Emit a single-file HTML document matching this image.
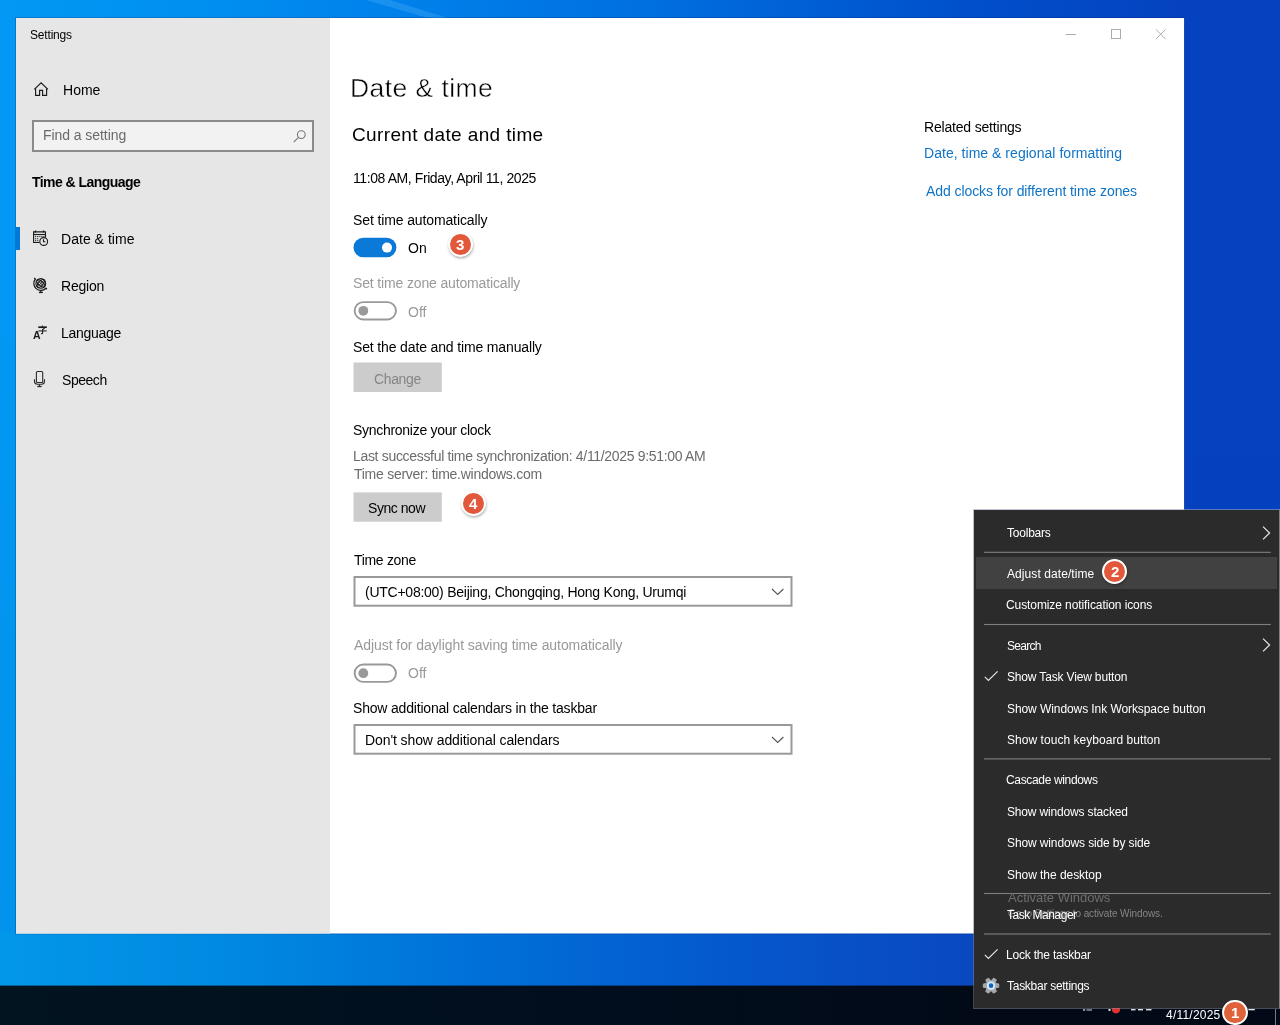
<!DOCTYPE html>
<html><head><meta charset="utf-8"><title>Settings</title>
<style>
html,body{margin:0;padding:0;}
body{width:1280px;height:1025px;overflow:hidden;position:relative;font-family:"Liberation Sans",sans-serif;background:#0540be;}
.t{position:absolute;white-space:nowrap;margin:0;padding:0;will-change:transform;}
.b{position:absolute;box-sizing:border-box;}
svg{position:absolute;overflow:visible;}
</style></head><body>
<div class="b" style="left:0;top:0;width:1280px;height:1025px;background:linear-gradient(180deg,rgba(0,0,0,0) 0px,rgba(0,10,30,0) 300px,rgba(0,10,30,.035) 933px,rgba(0,10,30,.035) 1025px),linear-gradient(90deg,#0298f3 0px,#0090f0 200px,#0086ee 320px,#0070e0 640px,#0050cc 960px,#0542c0 1180px,#0542c0 1280px);"></div>
<div class="b" style="left:0;top:933px;width:1280px;height:54px;background:linear-gradient(90deg,#0397ea 0px,#0088e0 250px,#0070d8 480px,#0558cc 730px,#0a48c0 970px,#0a44be 1280px);"></div>
<svg style="left:330px;top:0" width="140" height="18"><polygon points="36,0 60,0 118,18 98,18" fill="rgba(120,200,255,.22)"/></svg>
<svg style="left:0;top:984px" width="1280" height="41"><defs><linearGradient id="tb" x1="0" x2="1" y1="0" y2="0"><stop offset="0" stop-color="#02141f"/><stop offset=".39" stop-color="#010f1e"/><stop offset=".76" stop-color="#020a18"/><stop offset="1" stop-color="#020a18"/></linearGradient></defs><rect x="0" y="1.6" width="1280" height="40" fill="url(#tb)"/></svg>
<svg style="left:13px;top:15px" width="1176" height="924"><rect x="2.70" y="2.70" width="1168.60" height="916.10" rx="0.00" fill="none" stroke="rgba(0,20,70,.28)" stroke-width="1"/></svg>
<svg style="left:14px;top:16px" width="1175" height="922"><rect x="2.00" y="2.00" width="1168.10" height="915.50" rx="0" fill="#fff"/></svg>
<svg style="left:14px;top:16px" width="320" height="922"><rect x="2.00" y="2.00" width="314.00" height="915.50" rx="0" fill="#e6e6e6"/></svg>
<div class="t" style="left:29.50px;top:28.59px;font-size:12px;line-height:12px;color:#000;letter-spacing:-0.179px;">Settings</div>
<svg style="left:1060px;top:24px" width="120" height="20" viewBox="1060 24 120 20"><g stroke="#acacac" stroke-width="1" fill="none"><path d="M1065.5 34.5H1076"/><rect x="1111.5" y="29.5" width="9" height="9"/><path d="M1156 29.5l9.5 9.5M1165.5 29.5l-9.5 9.5"/></g></svg>
<div class="t" style="left:62.90px;top:82.65px;font-size:14px;line-height:14px;color:#000;letter-spacing:0.017px;">Home</div>
<div class="b" style="left:32px;top:120px;width:282px;height:31.5px;background:#f2f2f2;border:2px solid #8a8a8a;"></div>
<div class="t" style="left:42.90px;top:128.15px;font-size:14px;line-height:14px;color:#6a6a6a;letter-spacing:-0.065px;">Find a setting</div>
<div class="t" style="left:32.15px;top:175.15px;font-size:14px;line-height:14px;color:#000;letter-spacing:-0.546px;font-weight:bold;">Time &amp; Language</div>
<div class="b" style="left:16px;top:227px;width:4px;height:23px;background:#0078d7;"></div>
<div class="t" style="left:61.30px;top:232.15px;font-size:14px;line-height:14px;color:#000;letter-spacing:0.030px;">Date &amp; time</div>
<div class="t" style="left:61.30px;top:279.15px;font-size:14px;line-height:14px;color:#000;letter-spacing:-0.200px;">Region</div>
<div class="t" style="left:61.30px;top:326.15px;font-size:14px;line-height:14px;color:#000;letter-spacing:-0.286px;">Language</div>
<div class="t" style="left:61.80px;top:373.15px;font-size:14px;line-height:14px;color:#000;letter-spacing:-0.460px;">Speech</div>
<div class="t" style="left:350.40px;top:75.07px;font-size:26.5px;line-height:26.5px;color:#000;letter-spacing:0.430px;-webkit-text-stroke:0.45px #fff;">Date &amp; time</div>
<div class="t" style="left:352.10px;top:125.42px;font-size:19px;line-height:19px;color:#000;letter-spacing:0.370px;">Current date and time</div>
<div class="t" style="left:352.75px;top:171.15px;font-size:14px;line-height:14px;color:#000;letter-spacing:-0.411px;">11:08 AM, Friday, April 11, 2025</div>
<div class="t" style="left:353.15px;top:212.65px;font-size:14px;line-height:14px;color:#000;letter-spacing:-0.121px;">Set time automatically</div>
<svg style="left:351px;top:235px" width="49" height="26"><rect x="2.50" y="2.70" width="42.90" height="19.60" rx="9.8" fill="#0a79d8"/></svg>
<svg style="left:380px;top:240px" width="16" height="16"><circle cx="7.00" cy="7.60" r="5" fill="#fff"/></svg>
<div class="t" style="left:408.30px;top:241.45px;font-size:14px;line-height:14px;color:#000;letter-spacing:0.000px;">On</div>
<div class="t" style="left:353.15px;top:276.15px;font-size:14px;line-height:14px;color:#999;letter-spacing:-0.148px;">Set time zone automatically</div>
<svg style="left:351px;top:299px" width="50" height="26"><rect x="3.65" y="3.15" width="41.30" height="17.30" rx="8.65" fill="none" stroke="#999" stroke-width="1.9"/></svg>
<svg style="left:356px;top:303px" width="16" height="16"><circle cx="7.30" cy="7.80" r="4.9" fill="#999"/></svg>
<div class="t" style="left:408.15px;top:304.85px;font-size:14px;line-height:14px;color:#999;letter-spacing:0.000px;">Off</div>
<div class="t" style="left:353.15px;top:339.85px;font-size:14px;line-height:14px;color:#000;letter-spacing:-0.143px;">Set the date and time manually</div>
<svg style="left:351px;top:360px" width="95" height="36"><rect x="2.50" y="2.50" width="88.30" height="29.55" rx="0" fill="#ccc"/></svg>
<div class="t" style="left:373.80px;top:371.65px;font-size:14px;line-height:14px;color:#858585;letter-spacing:-0.360px;">Change</div>
<div class="t" style="left:353.15px;top:422.95px;font-size:14px;line-height:14px;color:#000;letter-spacing:-0.286px;">Synchronize your clock</div>
<div class="t" style="left:353.30px;top:448.75px;font-size:14px;line-height:14px;color:#6b6b6b;letter-spacing:-0.319px;">Last successful time synchronization: 4/11/2025 9:51:00 AM</div>
<div class="t" style="left:353.70px;top:466.75px;font-size:14px;line-height:14px;color:#6b6b6b;letter-spacing:-0.264px;">Time server: time.windows.com</div>
<svg style="left:351px;top:490px" width="95" height="36"><rect x="2.50" y="2.40" width="88.30" height="29.30" rx="0" fill="#ccc"/></svg>
<div class="t" style="left:368.00px;top:500.85px;font-size:14px;line-height:14px;color:#000;letter-spacing:-0.457px;">Sync now</div>
<div class="t" style="left:353.70px;top:552.55px;font-size:14px;line-height:14px;color:#000;letter-spacing:-0.312px;">Time zone</div>
<svg style="left:351px;top:574px" width="445" height="37"><rect x="3.50" y="3.00" width="437.00" height="28.70" rx="0.00" fill="#fff" stroke="#999" stroke-width="2"/></svg>
<div class="t" style="left:365.10px;top:584.65px;font-size:14px;line-height:14px;color:#000;letter-spacing:-0.252px;">(UTC+08:00) Beijing, Chongqing, Hong Kong, Urumqi</div>
<div class="t" style="left:354.00px;top:638.05px;font-size:14px;line-height:14px;color:#999;letter-spacing:-0.070px;">Adjust for daylight saving time automatically</div>
<svg style="left:351px;top:661px" width="50" height="26"><rect x="3.65" y="3.55" width="41.30" height="17.30" rx="8.65" fill="none" stroke="#999" stroke-width="1.9"/></svg>
<svg style="left:356px;top:666px" width="16" height="16"><circle cx="7.30" cy="7.20" r="4.9" fill="#999"/></svg>
<div class="t" style="left:408.15px;top:666.25px;font-size:14px;line-height:14px;color:#999;letter-spacing:0.000px;">Off</div>
<div class="t" style="left:353.40px;top:700.95px;font-size:14px;line-height:14px;color:#000;letter-spacing:-0.187px;">Show additional calendars in the taskbar</div>
<svg style="left:351px;top:722px" width="445" height="37"><rect x="3.50" y="3.00" width="437.00" height="28.70" rx="0.00" fill="#fff" stroke="#999" stroke-width="2"/></svg>
<div class="t" style="left:364.80px;top:732.65px;font-size:14px;line-height:14px;color:#000;letter-spacing:-0.093px;">Don&#x27;t show additional calendars</div>
<svg style="left:769.5px;top:587.3px" width="16" height="10" viewBox="0 0 16 10"><path d="M2 2l5.7 5.5L13.4 2" stroke="#555" stroke-width="1.1" fill="none"/></svg>
<svg style="left:769.5px;top:735.3px" width="16" height="10" viewBox="0 0 16 10"><path d="M2 2l5.7 5.5L13.4 2" stroke="#555" stroke-width="1.1" fill="none"/></svg>
<div class="t" style="left:924.40px;top:119.65px;font-size:14px;line-height:14px;color:#000;letter-spacing:-0.187px;">Related settings</div>
<div class="t" style="left:924.40px;top:146.15px;font-size:14px;line-height:14px;color:#0f74c6;letter-spacing:0.035px;">Date, time &amp; regional formatting</div>
<div class="t" style="left:925.50px;top:183.65px;font-size:14px;line-height:14px;color:#0f74c6;letter-spacing:-0.079px;">Add clocks for different time zones</div>
<div class="b" style="left:447.60px;top:232.20px;width:25.2px;height:25.2px;border-radius:50%;background:#e1583a;border:2px solid #fff;box-shadow:0.5px 1.5px 2.5px rgba(0,0,0,.3);"></div>
<div class="t" style="left:456.15px;top:237.45px;font-size:15px;line-height:15px;color:#fff;letter-spacing:0.000px;font-weight:bold;">3</div>
<div class="b" style="left:461.10px;top:491.20px;width:25.2px;height:25.2px;border-radius:50%;background:#e1583a;border:2px solid #fff;box-shadow:0.5px 1.5px 2.5px rgba(0,0,0,.3);"></div>
<div class="t" style="left:469.45px;top:496.45px;font-size:15px;line-height:15px;color:#fff;letter-spacing:0.000px;font-weight:bold;">4</div>
<div class="t" style="left:1166.00px;top:1009.04px;font-size:12px;line-height:12px;color:#fff;letter-spacing:0.225px;">4/11/2025</div>
<div class="b" style="left:1275px;top:1009px;width:1px;height:16px;background:#7a7a7a;"></div>
<svg style="left:1246px;top:1007px" width="13" height="8"><rect x="2.30" y="2.00" width="6.50" height="1.30" rx="0" fill="#e8e8e8"/></svg>
<svg style="left:1129px;top:1007px" width="11" height="8"><rect x="2.00" y="2.00" width="4.50" height="1.40" rx="0" fill="#e0e0e0"/></svg>
<svg style="left:1136px;top:1007px" width="11" height="8"><rect x="2.00" y="2.00" width="5.00" height="1.40" rx="0" fill="#e0e0e0"/></svg>
<svg style="left:1144px;top:1007px" width="12" height="8"><rect x="2.00" y="2.00" width="5.50" height="1.40" rx="0" fill="#e0e0e0"/></svg>
<svg style="left:1081px;top:1007px" width="9" height="8"><rect x="2.00" y="2.20" width="2.20" height="1.60" rx="0" fill="#b0b0b0"/></svg>
<svg style="left:1084px;top:1007px" width="12" height="8"><rect x="2.50" y="2.20" width="5.50" height="1.60" rx="0" fill="#8a8a8a"/></svg>
<svg style="left:1106px;top:1007px" width="8" height="8"><rect x="2.50" y="2.00" width="2.00" height="2.00" rx="0" fill="#ddd"/></svg>
<svg style="left:1109px;top:1003px" width="15" height="15"><circle cx="7.00" cy="6.30" r="4.1" fill="#e23030"/></svg>
<div class="b" style="left:973px;top:509px;width:307px;height:500px;background:#2b2b2b;background-clip:padding-box;border-style:solid;border-width:1px;border-color:rgba(150,158,185,.6) #808080 rgba(140,145,155,.5) rgba(128,128,128,.5);"></div>
<div class="b" style="left:976px;top:557px;width:301px;height:32px;background:#414141;"></div>
<svg style="left:982px;top:549px" width="293" height="8"><rect x="2.00" y="2.75" width="286.80" height="1.10" rx="0" fill="#808080"/></svg>
<svg style="left:982px;top:621px" width="293" height="8"><rect x="2.00" y="2.95" width="286.80" height="1.10" rx="0" fill="#808080"/></svg>
<svg style="left:982px;top:756px" width="293" height="8"><rect x="2.00" y="2.35" width="286.80" height="1.10" rx="0" fill="#808080"/></svg>
<svg style="left:982px;top:890px" width="293" height="8"><rect x="2.00" y="2.95" width="286.80" height="1.10" rx="0" fill="#808080"/></svg>
<svg style="left:982px;top:931px" width="293" height="8"><rect x="2.00" y="2.45" width="286.80" height="1.10" rx="0" fill="#808080"/></svg>
<div class="t" style="left:1006.80px;top:527.34px;font-size:12px;line-height:12px;color:#fff;letter-spacing:-0.221px;">Toolbars</div>
<div class="t" style="left:1007.00px;top:567.94px;font-size:12px;line-height:12px;color:#fff;letter-spacing:0.077px;">Adjust date/time</div>
<div class="t" style="left:1006.40px;top:599.34px;font-size:12px;line-height:12px;color:#fff;letter-spacing:-0.091px;">Customize notification icons</div>
<div class="t" style="left:1006.50px;top:639.84px;font-size:12px;line-height:12px;color:#fff;letter-spacing:-0.700px;">Search</div>
<div class="t" style="left:1006.50px;top:670.84px;font-size:12px;line-height:12px;color:#fff;letter-spacing:-0.160px;">Show Task View button</div>
<div class="t" style="left:1006.50px;top:702.84px;font-size:12px;line-height:12px;color:#fff;letter-spacing:-0.078px;">Show Windows Ink Workspace button</div>
<div class="t" style="left:1006.50px;top:734.24px;font-size:12px;line-height:12px;color:#fff;letter-spacing:0.044px;">Show touch keyboard button</div>
<div class="t" style="left:1006.40px;top:774.34px;font-size:12px;line-height:12px;color:#fff;letter-spacing:-0.343px;">Cascade windows</div>
<div class="t" style="left:1006.50px;top:805.94px;font-size:12px;line-height:12px;color:#fff;letter-spacing:-0.163px;">Show windows stacked</div>
<div class="t" style="left:1006.50px;top:836.94px;font-size:12px;line-height:12px;color:#fff;letter-spacing:-0.121px;">Show windows side by side</div>
<div class="t" style="left:1006.50px;top:868.64px;font-size:12px;line-height:12px;color:#fff;letter-spacing:-0.053px;">Show the desktop</div>
<div class="t" style="left:1008.00px;top:891.20px;font-size:13px;line-height:13px;color:#6e6e6e;letter-spacing:-0.020px;">Activate Windows</div>
<div class="t" style="left:1007.80px;top:908.53px;font-size:10px;line-height:10px;color:#858585;letter-spacing:-0.091px;">Go to Settings to activate Windows.</div>
<div class="t" style="left:1006.80px;top:908.84px;font-size:12px;line-height:12px;color:#fff;letter-spacing:-0.482px;">Task Manager</div>
<div class="t" style="left:1006.10px;top:948.84px;font-size:12px;line-height:12px;color:#fff;letter-spacing:-0.200px;">Lock the taskbar</div>
<div class="t" style="left:1006.80px;top:980.34px;font-size:12px;line-height:12px;color:#fff;letter-spacing:-0.273px;">Taskbar settings</div>
<svg style="left:1260px;top:524.5px" width="12" height="16" viewBox="0 0 12 16"><path d="M3 1.6l6.6 6.4-6.6 6.4" stroke="#e6e6e6" stroke-width="1.2" fill="none"/></svg>
<svg style="left:1260px;top:637px" width="12" height="16" viewBox="0 0 12 16"><path d="M3 1.6l6.6 6.4-6.6 6.4" stroke="#e6e6e6" stroke-width="1.2" fill="none"/></svg>
<svg style="left:983px;top:669.8px" width="16" height="12" viewBox="0 0 16 12"><path d="M1.8 6.8l3.6 3.6L14.6 1.4" stroke="#e6e6e6" stroke-width="1.2" fill="none"/></svg>
<svg style="left:983px;top:947.8px" width="16" height="12" viewBox="0 0 16 12"><path d="M1.8 6.8l3.6 3.6L14.6 1.4" stroke="#e6e6e6" stroke-width="1.2" fill="none"/></svg>
<div class="b" style="left:1102.20px;top:558.70px;width:25.2px;height:25.2px;border-radius:50%;background:#e1583a;border:2px solid #fff;box-shadow:0.5px 1.5px 2.5px rgba(0,0,0,.3);"></div>
<div class="t" style="left:1110.65px;top:563.95px;font-size:15px;line-height:15px;color:#fff;letter-spacing:0.000px;font-weight:bold;">2</div>
<div class="b" style="left:1222.40px;top:999.50px;width:25.2px;height:25.2px;border-radius:50%;background:#e0623a;border:2px solid #fff;box-shadow:0.5px 1.5px 2.5px rgba(0,0,0,.3);"></div>
<div class="t" style="left:1230.55px;top:1004.75px;font-size:15px;line-height:15px;color:#fff;letter-spacing:0.000px;font-weight:bold;">1</div>
<svg style="left:0;top:0" width="1280" height="1025" viewBox="0 0 1280 1025"><g fill="none" stroke="#1a1a1a" stroke-width="1.15" stroke-linejoin="miter"><path d="M34.3 89.4L41.1 82.9L47.9 89.4"/><path d="M35.6 88.4V95.3H39.6V90.3H42.6V95.3H46.6V88.4"/></g><g fill="none" stroke="#777" stroke-width="1.1"><circle cx="301.3" cy="134.6" r="3.9"/><path d="M298.5 137.4L293.7 142.2"/></g><g fill="none" stroke="#1a1a1a" stroke-width="1.1"><path d="M39.5 242.5H33.6V231.9H45.5V237.2"/><path d="M33.6 234.5H45.5"/><path d="M35.5 230.6v1.8M43.5 230.6v1.8" stroke-width="1.3"/><circle cx="43.7" cy="241.5" r="3.9"/><path d="M43.5 239.2V241.7H45.4"/></g><rect x="35.0" y="235.9" width="1.2" height="1.2" fill="#333"/><rect x="37.1" y="235.9" width="1.2" height="1.2" fill="#333"/><rect x="39.199999999999996" y="235.9" width="1.2" height="1.2" fill="#333"/><rect x="41.3" y="235.9" width="1.2" height="1.2" fill="#333"/><rect x="43.4" y="235.9" width="1.2" height="1.2" fill="#333"/><rect x="35.0" y="238.1" width="1.2" height="1.2" fill="#333"/><rect x="37.1" y="238.1" width="1.2" height="1.2" fill="#333"/><rect x="35.0" y="240.1" width="1.2" height="1.2" fill="#333"/><rect x="37.1" y="240.1" width="1.2" height="1.2" fill="#333"/><g fill="none" stroke="#1a1a1a" stroke-width="1.1"><circle cx="40.8" cy="283.4" r="4.9"/><ellipse cx="40.8" cy="283.4" rx="2.2" ry="4.9" transform="rotate(40 40.8 283.4)"/><ellipse cx="40.8" cy="283.4" rx="2.2" ry="4.9" transform="rotate(-50 40.8 283.4)"/><path d="M37.3 279.9L44.3 286.9M44.3 279.9L37.3 286.9" stroke-width="0.9"/><path d="M34.2 278.0L35.36 279.0A7 7 0 0 0 45.84 288.26L46.9 289.3" stroke-width="1.3"/><path d="M40.8 290.4V292.2"/><path d="M38.9 292.4H42.8" stroke-width="1.4"/></g><text x="32.9" y="339" font-family="Liberation Sans, sans-serif" font-size="10.5" font-weight="bold" fill="#1a1a1a">A</text><g fill="none" stroke="#1a1a1a"><path d="M38.3 327.2H46.8" stroke-width="1.7"/><path d="M42.4 325.6v1.2" stroke-width="1.1"/><path d="M38.3 330.9H46.8" stroke="#555" stroke-width="1.4"/><path d="M44.6 328.2L42.6 329.6V333Q42.6 333.9 41 333.6" stroke-width="1.1"/></g><g fill="none" stroke="#2a2a2a" stroke-width="1.1"><rect x="36.4" y="371.5" width="6.3" height="11" rx="1.1"/><path d="M34.5 379.2V381.3Q34.5 384.3 37.5 384.3H41.5Q44.5 384.3 44.5 381.3V379.2"/><path d="M39.5 384.3V386.2"/><path d="M37.3 386.5H41.7" stroke-width="1.3"/></g><path d="M995.89 983.49 L998.78 984.01 L998.78 987.29 L995.89 987.81 L995.34 988.77 L996.34 991.52 L993.49 993.16 L991.60 990.92 L990.50 990.92 L988.61 993.16 L985.76 991.52 L986.76 988.77 L986.21 987.81 L983.32 987.29 L983.32 984.01 L986.21 983.49 L986.76 982.53 L985.76 979.78 L988.61 978.14 L990.50 980.38 L991.60 980.38 L993.49 978.14 L996.34 979.78 L995.34 982.53Z" fill="#a6aaae" stroke="#a6aaae" stroke-width="1.0" stroke-linejoin="round"/><circle cx="991.05" cy="985.65" r="4.1" fill="#d6eaf8"/><circle cx="991.05" cy="985.65" r="2.3" fill="#0f62b8"/></svg>
</body></html>
